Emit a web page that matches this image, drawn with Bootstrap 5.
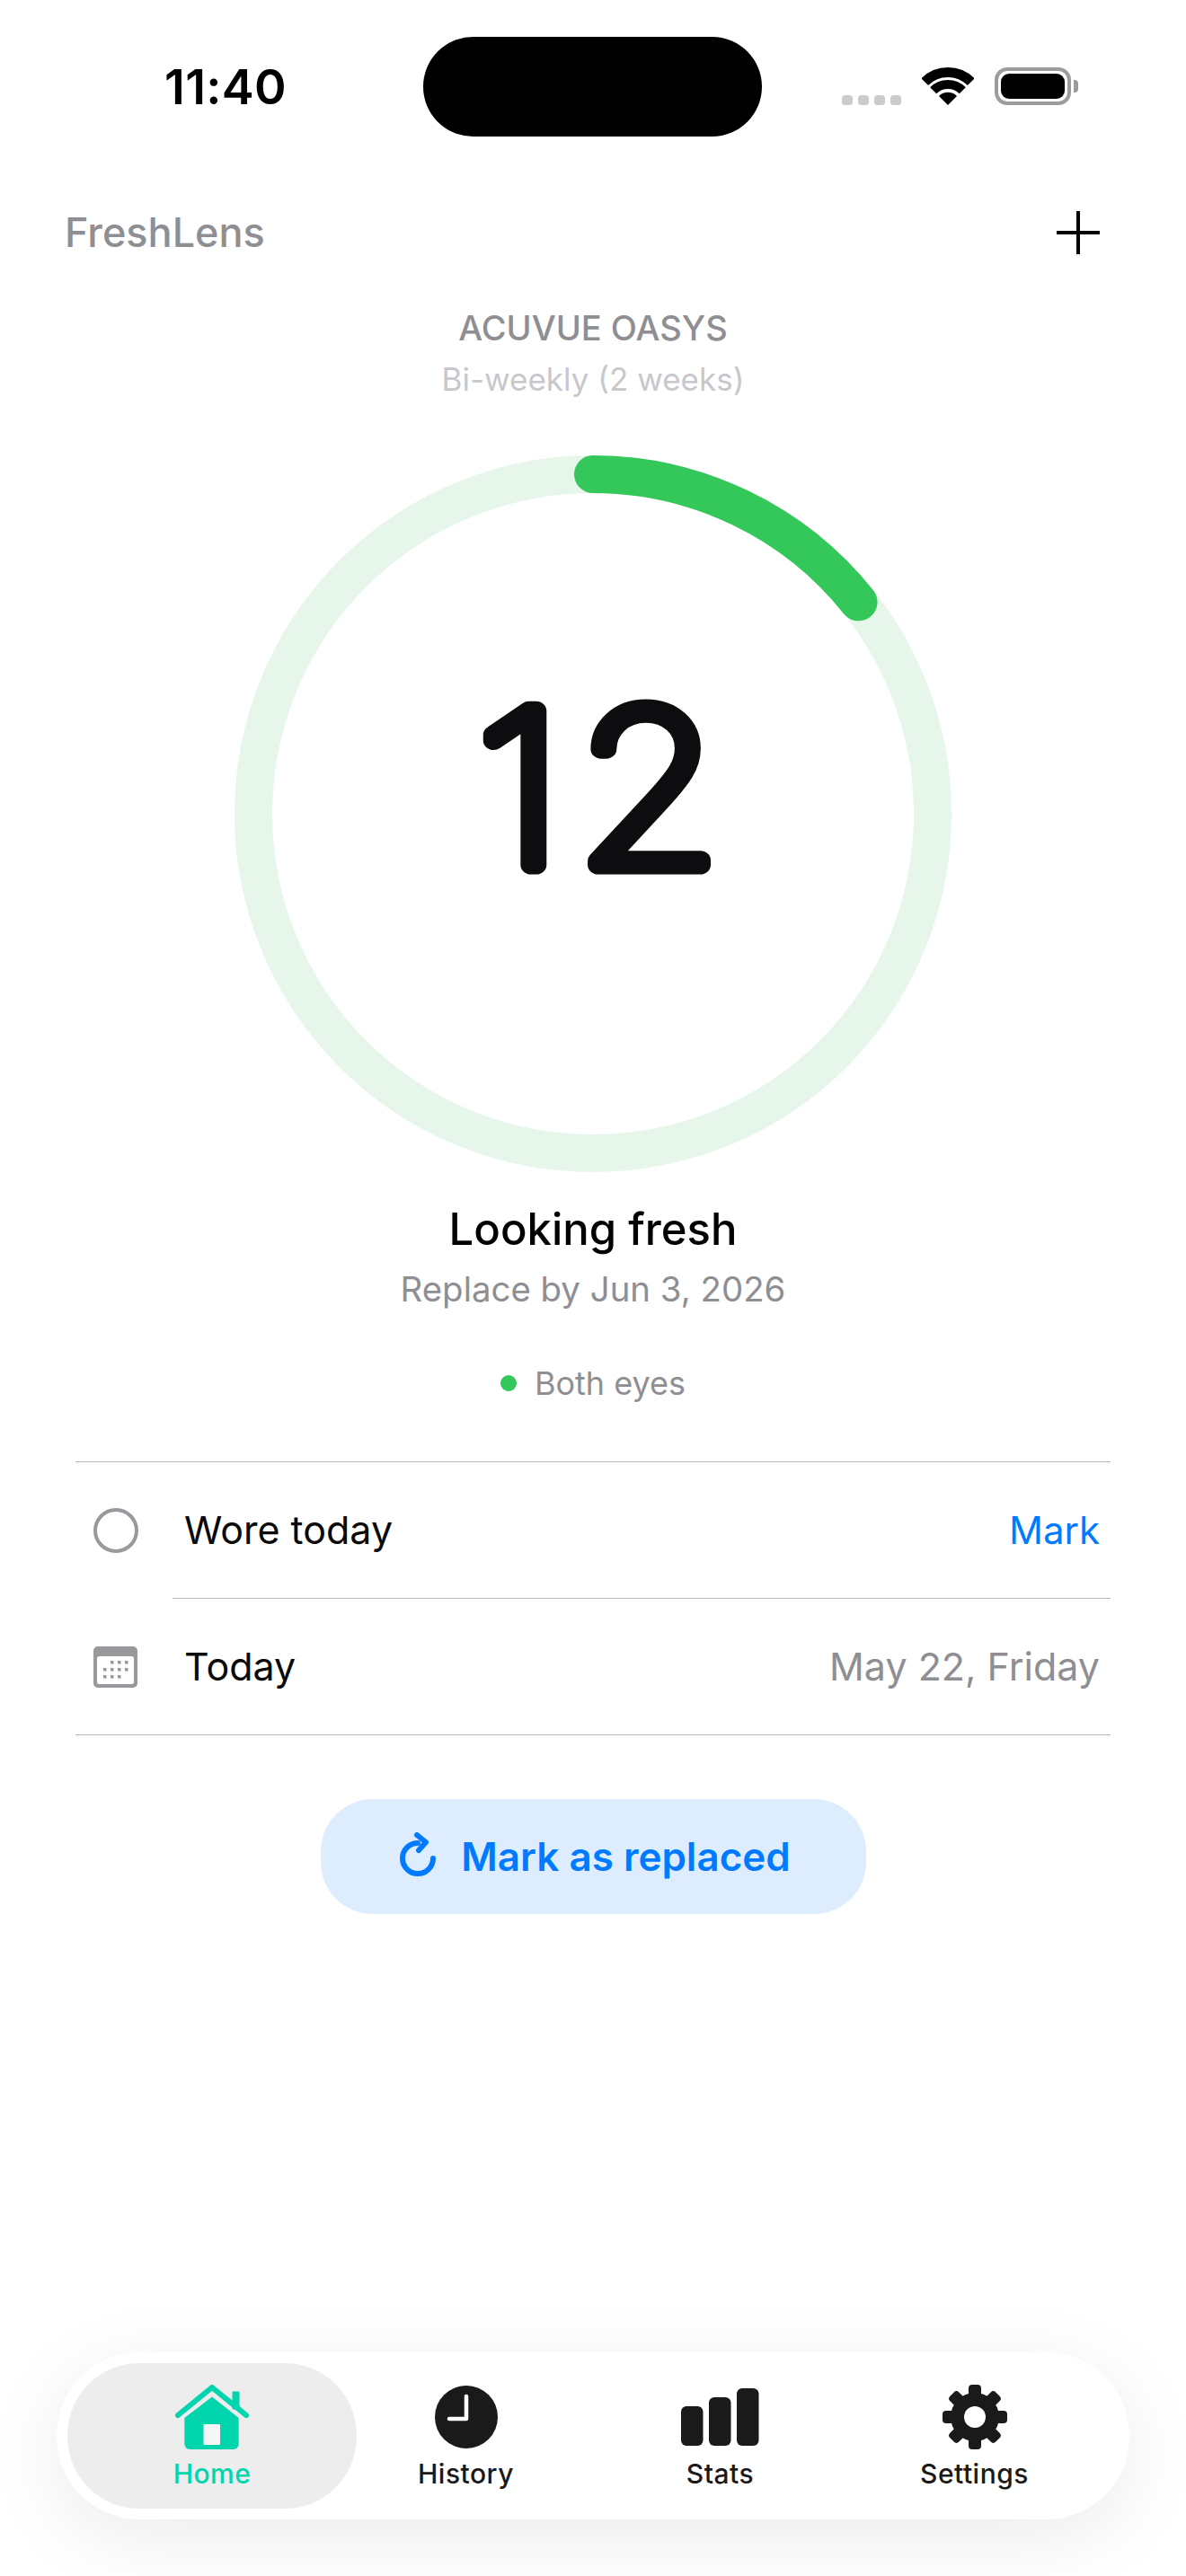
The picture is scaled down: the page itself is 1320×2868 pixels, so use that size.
<!DOCTYPE html>
<html lang="en">
<head>
    <meta charset="UTF-8">
    <meta name="viewport" content="width=device-width, initial-scale=1.0">
    <title>FreshLens</title>
    <link href="https://cdn.jsdelivr.net/npm/bootstrap@5.3.0/dist/css/bootstrap.min.css" rel="stylesheet">
    <style>
        html, body { height: 100%; }
        body { font-family: Inter, "Liberation Sans", sans-serif; background: #fff; color: #0a0a0a; overflow: hidden; }
        .screen { height: 2868px; width: 1320px; }

        /* status bar */
        .status-bar { padding-top: 41px; height: 152px; padding-left: 183px; }
        .clock { width: 288px; font-size: 54px; font-weight: 600; line-height: 111px; color: #000; letter-spacing: .3px; }
        .island { width: 377px; height: 111px; background: #000; border-radius: 56px; }
        .status-icons { margin-left: 89px; margin-top: 34px; height: 42px; }
        .sig-dots { gap: 6.5px; margin-top: 31px; margin-right: 23px; }
        .sig-dots span { width: 11.5px; height: 11px; background: #cbcbcb; border-radius: 3.5px; }
        .batt { width: 85px; height: 42px; border: 4px solid #9c9c9c; border-radius: 14px; padding: 3px; margin-left: 23px; }
        .batt-fill { background: #000; border-radius: 9px; height: 100%; }
        .batt-nub { width: 5px; height: 14px; background: #9c9c9c; border-radius: 0 4px 4px 0; margin-left: 3px; margin-top: 14px; }

        /* header */
        .top-row { margin-top: 79px; padding: 0 96px 0 72px; height: 56px; }
        .app-name { font-size: 45px; font-weight: 500; line-height: 56px; color: #8e8e93; }
        .lens-name { margin-top: 56px; font-size: 38px; font-weight: 500; line-height: 44px; color: #8e8e93; }
        .lens-cycle { margin-top: 13px; font-size: 35px; line-height: 44px; color: #c7c7cc; }

        /* ring */
        .ring { margin-top: 63px; width: 798px; height: 798px; display: block; }
        .ring-num { font-family: Inter, sans-serif; font-size: 236px; font-weight: 100; fill: #0d0d0f; stroke: #0d0d0f; stroke-width: 21px; stroke-linejoin: round; letter-spacing: 14px; }

        .state-title { margin-top: 34px; font-size: 49px; font-weight: 500; line-height: 60px; color: #000; }
        .state-sub { margin-top: 12px; font-size: 38.4px; line-height: 48px; color: #8e8e93; }
        .eye-row { margin-top: 59px; height: 44px; font-size: 36px; line-height: 44px; color: #8e8e93; gap: 20px; }
        .eye-dot { width: 18px; height: 18px; background: #34c759; border-radius: 50%; }

        /* rows */
        .info-list { margin: 65px 84px 0; border-top: 1px solid #b8b8b8; border-bottom: 1px solid #b8b8b8; border-radius: 0; }
        .info-list .list-group-item { padding: 0; border: 0; height: 152px; }
        .info-list .list-group-item + .list-group-item { height: 151px; }
        .row-icon { width: 108px; padding-left: 20px; flex: none; }
        .row-body { height: 100%; padding: 0 12px 0 13px; font-size: 43px; color: #0a0a0a; }
        .row-body.split { border-bottom: 1px solid #b8b8b8; }
        .row-link { color: #007aff; font-size: 42px; }
        .row-value { color: #8e8e93; }

        /* replace button */
        .replace-btn { margin-top: 71px; width: 607px; height: 128px; border-radius: 58px; border: 0; background: #deedfe; color: #007aff; font-size: 44px; font-weight: 600; gap: 26px; padding: 0; }
        .replace-btn:hover { background: #deedfe; color: #007aff; }
        .replace-btn svg { margin-left: 3px; }

        /* tab bar */
        .tab-bar { margin: auto 63px 63px; height: 186px; padding: 12px; background: #fff; border-radius: 92px; box-shadow: 0 20px 90px rgba(0, 0, 0, .08); }
        .tab-item { width: 283px; height: 162px; border-radius: 80px; color: #1a1a1a; font-size: 30px; font-weight: 500; line-height: 36px; letter-spacing: .5px; padding-top: 24px; text-decoration: none; }
        .tab-item svg { height: 72px; margin-bottom: 9px; display: block; }
        .tab-item.on { width: 322px; margin-right: -20px; background: #ededed; color: #00d5ad; }
    </style>
</head>
<body>
    <div class="screen d-flex flex-column">

        <!-- status bar -->
        <div class="status-bar d-flex align-items-start">
            <div class="clock">11:40</div>
            <div class="island"></div>
            <div class="status-icons d-flex align-items-start">
                <div class="sig-dots d-flex"><span></span><span></span><span></span><span></span></div>
                <svg width="58" height="42" viewBox="0 0 58 42">
                    <g fill="none" stroke="#000">
                        <path stroke-width="11" d="M3.2 16.2A36.5 36.5 0 0 1 54.8 16.2"/>
                        <path stroke-width="10" d="M12.7 25.7A23 23 0 0 1 45.3 25.7"/>
                    </g>
                    <path d="M19 32A14 14 0 0 1 39 32L29 42Z" fill="#000"/>
                </svg>
                <div class="batt"><div class="batt-fill"></div></div>
                <div class="batt-nub"></div>
            </div>
        </div>

        <!-- header -->
        <div class="top-row d-flex justify-content-between align-items-center">
            <div class="app-name">FreshLens</div>
            <svg width="48" height="48" viewBox="0 0 48 48"><path d="M24 0V48M0 24H48" stroke="#000" stroke-width="4" stroke-linecap="round"/></svg>
        </div>

        <div class="text-center lens-name">ACUVUE OASYS</div>
        <div class="text-center lens-cycle">Bi-weekly (2 weeks)</div>

        <!-- countdown ring -->
        <svg class="ring mx-auto" viewBox="0 0 798 798">
            <circle cx="399" cy="399" r="378" fill="none" stroke="#e6f6ea" stroke-width="42"/>
            <circle cx="399" cy="399" r="378" fill="none" stroke="#34c759" stroke-width="42" stroke-linecap="round"
                    pathLength="14" stroke-dasharray="2 12" transform="rotate(-90 399 399)"/>
            <text class="ring-num" text-anchor="middle" transform="translate(413.5 456) scale(1.1 1)">12</text>
        </svg>

        <div class="text-center state-title">Looking fresh</div>
        <div class="text-center state-sub">Replace by Jun 3, 2026</div>
        <div class="eye-row d-flex justify-content-center align-items-center">
            <span class="eye-dot"></span>
            <span>Both eyes</span>
        </div>

        <!-- rows -->
        <ul class="list-group list-group-flush info-list">
            <li class="list-group-item d-flex align-items-center">
                <div class="row-icon">
                    <svg class="d-block" width="50" height="50" viewBox="0 0 50 50"><circle cx="25" cy="25" r="23" fill="none" stroke="#98989d" stroke-width="4"/></svg>
                </div>
                <div class="row-body split flex-grow-1 d-flex justify-content-between align-items-center">
                    <span>Wore today</span>
                    <span class="row-link">Mark</span>
                </div>
            </li>
            <li class="list-group-item d-flex align-items-center">
                <div class="row-icon">
                    <svg class="d-block" width="49" height="46" viewBox="0 0 49 46">
                        <rect x="0" y="0" width="49" height="46" rx="5" fill="#98989d"/>
                        <rect x="4" y="11" width="41" height="31" rx="2.5" fill="#fff"/>
                        <g fill="#98989d">
                            <rect x="19" y="16" width="3.5" height="3.5"/><rect x="27" y="16" width="3.5" height="3.5"/><rect x="35" y="16" width="3.5" height="3.5"/>
                            <rect x="11" y="24" width="3.5" height="3.5"/><rect x="19" y="24" width="3.5" height="3.5"/><rect x="27" y="24" width="3.5" height="3.5"/><rect x="35" y="24" width="3.5" height="3.5"/>
                            <rect x="11" y="32" width="3.5" height="3.5"/><rect x="19" y="32" width="3.5" height="3.5"/><rect x="27" y="32" width="3.5" height="3.5"/>
                        </g>
                    </svg>
                </div>
                <div class="row-body flex-grow-1 d-flex justify-content-between align-items-center">
                    <span>Today</span>
                    <span class="row-value">May 22, Friday</span>
                </div>
            </li>
        </ul>

        <button type="button" class="btn replace-btn mx-auto d-flex align-items-center justify-content-center">
            <svg width="44" height="54" viewBox="0 0 44 54" fill="none" stroke="#007aff" stroke-width="6" stroke-linecap="round" stroke-linejoin="round">
                <path d="M39 29A17 17 0 1 1 22 12"/>
                <path d="M21 3L31 11L23 20"/>
            </svg>
            <span>Mark as replaced</span>
        </button>

        <!-- tab bar -->
        <nav class="tab-bar d-flex">
            <a class="tab-item on d-flex flex-column align-items-center" href="#">
                <svg width="82" height="72" viewBox="0 0 82 72">
                    <path d="M41 13.5L70.7 37V66A6 6 0 0 1 64.7 72H16.3A6 6 0 0 1 10.3 66V37Z" fill="#00d5ad"/>
                    <path d="M2.5 34L41 2.5L79.5 34" fill="none" stroke="#ededed" stroke-width="11"/>
                    <rect x="63.5" y="7.5" width="8" height="20" rx="1" fill="#00d5ad"/>
                    <path d="M3 34L41 3L79 34" fill="none" stroke="#00d5ad" stroke-width="6" stroke-linecap="round" stroke-linejoin="round"/>
                    <rect x="31.5" y="44" width="18.5" height="23" rx="1" fill="#f6f6f6"/>
                </svg>
                <span>Home</span>
            </a>
            <a class="tab-item d-flex flex-column align-items-center" href="#">
                <svg width="70" height="72" viewBox="0 0 70 72">
                    <circle cx="35" cy="36" r="35" fill="#1a1a1a"/>
                    <path d="M35 13V38H16" fill="none" stroke="#fff" stroke-width="4.5" stroke-linecap="round" stroke-linejoin="round"/>
                </svg>
                <span>History</span>
            </a>
            <a class="tab-item d-flex flex-column align-items-center" href="#">
                <svg width="87" height="72" viewBox="0 0 87 72">
                    <rect x="0" y="24" width="24.5" height="44" rx="6" fill="#1a1a1a"/>
                    <rect x="31" y="14" width="24.5" height="54" rx="6" fill="#1a1a1a"/>
                    <rect x="62" y="4" width="24.5" height="64" rx="6" fill="#1a1a1a"/>
                </svg>
                <span>Stats</span>
            </a>
            <a class="tab-item d-flex flex-column align-items-center" href="#">
                <svg width="72" height="72" viewBox="-36 -36 72 72">
                    <g fill="#1a1a1a">
                        <circle r="27"/>
                        <rect x="-7" y="-36" width="14" height="16" rx="4"/>
                        <rect x="-7" y="-36" width="14" height="16" rx="4" transform="rotate(45)"/>
                        <rect x="-7" y="-36" width="14" height="16" rx="4" transform="rotate(90)"/>
                        <rect x="-7" y="-36" width="14" height="16" rx="4" transform="rotate(135)"/>
                        <rect x="-7" y="-36" width="14" height="16" rx="4" transform="rotate(180)"/>
                        <rect x="-7" y="-36" width="14" height="16" rx="4" transform="rotate(225)"/>
                        <rect x="-7" y="-36" width="14" height="16" rx="4" transform="rotate(270)"/>
                        <rect x="-7" y="-36" width="14" height="16" rx="4" transform="rotate(315)"/>
                    </g>
                    <circle r="12" fill="#fff"/>
                </svg>
                <span>Settings</span>
            </a>
        </nav>
    </div>

    <script src="https://cdn.jsdelivr.net/npm/bootstrap@5.3.0/dist/js/bootstrap.bundle.min.js"></script>
</body>
</html>
